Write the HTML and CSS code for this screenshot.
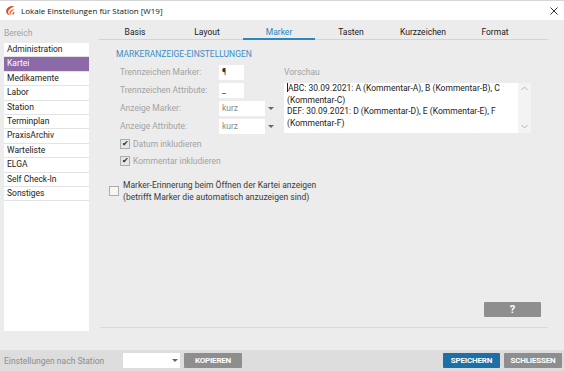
FILE: index.html
```html
<!DOCTYPE html>
<html lang="de">
<head>
    <meta charset="UTF-8">
    <meta name="viewport" content="width=device-width, initial-scale=1.0">
    <title>Lokale Einstellungen</title>
    <link rel="stylesheet" href="styles.css">
</head>
<body>
<div class="window">
    <div class="titlebar">
        <svg class="logo" width="11" height="11" viewBox="0 0 11 11">
            <path d="M9 1.2 C5 0.6 1.4 3 1.2 6.2 C1.1 8.4 2.8 10 5 10 C3.2 9 2.6 7.4 3.4 5.8 C4.4 3.6 6.8 2.4 9 1.2 Z" fill="#e0431f"/>
            <path d="M9.6 4.2 C7.2 4.2 4.8 5.4 4.4 7.4 C4.2 8.6 5 9.6 6.4 9.8 C5.6 8.8 5.8 7.6 6.8 6.6 C7.6 5.8 8.6 5 9.6 4.2 Z" fill="#f07a2a"/>
            <path d="M9.8 7 C8.6 7.2 7.6 7.8 7.4 8.6 C7.3 9.3 7.9 9.8 8.6 9.6 C8.4 8.8 9 7.8 9.8 7 Z" fill="#b82a18"/>
        </svg>
        <span class="title">Lokale Einstellungen für Station [W19]</span>
        <svg class="close" width="8" height="8" viewBox="0 0 8 8">
            <path d="M0.5 0.5 L7.5 7.5 M7.5 0.5 L0.5 7.5" stroke="#333" stroke-width="1"/>
        </svg>
    </div>

    <div class="main">
        <div class="sidebar">
            <div class="area-label">Bereich</div>
            <ul class="area-list">
                <li>Administration</li>
                <li class="selected">Kartei</li>
                <li>Medikamente</li>
                <li>Labor</li>
                <li>Station</li>
                <li>Terminplan</li>
                <li>PraxisArchiv</li>
                <li>Warteliste</li>
                <li>ELGA</li>
                <li>Self Check-In</li>
                <li>Sonstiges</li>
            </ul>
        </div>

        <div class="panel">
            <div class="tabs">
                <div class="tab">Basis</div>
                <div class="tab">Layout</div>
                <div class="tab active">Marker</div>
                <div class="tab">Tasten</div>
                <div class="tab">Kurzzeichen</div>
                <div class="tab">Format</div>
            </div>

            <div class="tab-body">
                <h2 class="section-title">MARKERANZEIGE-EINSTELLUNGEN</h2>

                <div class="marker-settings">
                    <div class="fields">
                        <div class="field-grid">
                            <label>Trennzeichen Marker:</label>
                            <div class="input short">¶</div>
                            <label>Trennzeichen Attribute:</label>
                            <div class="input short">_</div>
                            <label>Anzeige Marker:</label>
                            <div class="select"><span class="select-value">kurz</span><span class="arrow"></span></div>
                            <label>Anzeige Attribute:</label>
                            <div class="select"><span class="select-value">kurz</span><span class="arrow"></span></div>
                        </div>
                        <div class="check-row">
                            <span class="checkbox checked">✔</span>
                            <span class="check-text">Datum inkludieren</span>
                        </div>
                        <div class="check-row">
                            <span class="checkbox checked">✔</span>
                            <span class="check-text">Kommentar inkludieren</span>
                        </div>
                    </div>

                    <div class="preview">
                        <div class="preview-label">Vorschau</div>
                        <div class="preview-box">
                            <div class="preview-text">
                                <div><span class="caret"></span>ABC: 30.09.2021: A (Kommentar-A), B (Kommentar-B), C</div>
                                <div>(Kommentar-C)</div>
                                <div>DEF: 30.09.2021: D (Kommentar-D), E (Kommentar-E), F</div>
                                <div>(Kommentar-F)</div>
                            </div>
                            <div class="scrollbar">
                                <svg width="7" height="5" viewBox="0 0 7 5"><path d="M0.5 4 L3.5 1 L6.5 4" fill="none" stroke="#b4b4b4" stroke-width="1"/></svg>
                                <svg width="7" height="5" viewBox="0 0 7 5"><path d="M0.5 1 L3.5 4 L6.5 1" fill="none" stroke="#b4b4b4" stroke-width="1"/></svg>
                            </div>
                        </div>
                    </div>
                </div>

                <div class="reminder">
                    <span class="checkbox"></span>
                    <span class="reminder-text">Marker-Erinnerung beim Öffnen der Kartei anzeigen<br>(betrifft Marker die automatisch anzuzeigen sind)</span>
                </div>
            </div>

            <div class="help-row">
                <button class="btn help">?</button>
            </div>
        </div>
    </div>

    <div class="footer">
        <span class="footer-label">Einstellungen nach Station</span>
        <div class="select footer-select"><span class="arrow"></span></div>
        <button class="btn">KOPIEREN</button>
        <div class="footer-actions">
            <button class="btn primary">SPEICHERN</button>
            <button class="btn">SCHLIESSEN</button>
        </div>
    </div>
</div>
</body>
</html>
```

FILE: styles.css
```css
* {
    box-sizing: border-box;
}
body {
    margin: 0;
    font-family: Roboto, "Liberation Sans", sans-serif;
    font-size: 8.5px;
    color: #222;
    background: #ececec;
    overflow: hidden;
}
.window {
    width: 564px;
    height: 371px;
    display: flex;
    flex-direction: column;
    background: #ececec;
}

/* title bar */
.titlebar {
    height: 20px;
    background: #fff;
    border-top: 1px solid #d6d6d6;
    display: flex;
    align-items: center;
    padding: 0 5px;
}
.logo {
    margin-right: 5px;
}
.title {
    font-family: "Open Sans", sans-serif;
    font-size: 8px;
    color: #111;
    flex: 1;
}
.close {
    margin-right: 1px;
}

/* main area */
.main {
    flex: 1;
    display: flex;
    padding: 0 4px 19px 4px;
}
.sidebar {
    width: 85px;
    display: flex;
    flex-direction: column;
}
.area-label {
    height: 23px;
    padding-top: 7px;
    line-height: 12px;
    color: #a3a3a3;
}
.area-list {
    flex: 1;
    list-style: none;
    margin: 0;
    padding: 0;
    background: #fff;
}
.area-list li {
    height: 14.4px;
    line-height: 13.4px;
    padding-left: 3px;
    border-bottom: 1px solid #e3e3e3;
    color: #222;
}
.area-list li.selected {
    background: #8c69a7;
    color: #fff;
}

.panel {
    width: 448px;
    margin-left: 11px;
    margin-bottom: 3px;
    display: flex;
    flex-direction: column;
    border-bottom: 1px solid #d9d9d9;
}
.tabs {
    display: flex;
    padding-top: 6px;
    margin-left: -1px;
    border-bottom: 1px solid #d4d4d4;
}
.tab {
    width: 72px;
    height: 13px;
    line-height: 13px;
    text-align: center;
    color: #1a1a1a;
}
.tab.active {
    color: #2f85bd;
    height: 12px;
    line-height: 12px;
    margin-bottom: -1px;
    border-bottom: 2px solid #2f85bd;
    box-sizing: content-box;
}

.tab-body {
    padding-left: 9px;
}
.section-title {
    margin: 9px 0 5px 7px;
    font-size: 8.5px;
    font-weight: normal;
    line-height: 11px;
    color: #3a8fc7;
}
.marker-settings {
    display: flex;
}
.fields {
    width: 164px;
    margin-left: 11px;
}
.field-grid {
    display: grid;
    grid-template-columns: 99px auto;
    grid-auto-rows: 15px;
    row-gap: 3px;
}
.field-grid label {
    line-height: 15px;
    color: #a3a3a3;
}
.input {
    background: #fff;
    height: 15px;
    line-height: 15px;
    padding-left: 3px;
    color: #333;
}
.input.short {
    width: 25px;
}
.select {
    display: flex;
    width: 58px;
    height: 15px;
}
.select-value {
    width: 46px;
    background: #fff;
    line-height: 15px;
    padding-left: 3px;
    color: #8a8a8a;
}
.arrow {
    flex: 1;
    display: flex;
    align-items: center;
    justify-content: center;
}
.arrow::after {
    content: "";
    border-left: 3px solid transparent;
    border-right: 3px solid transparent;
    border-top: 3px solid #666;
}

.check-row {
    display: flex;
    align-items: center;
    height: 15px;
    margin-top: 2px;
}
.check-row:first-of-type {
    margin-top: 3px;
}
.checkbox {
    width: 10px;
    height: 10px;
    border: 1px solid #adadad;
    background: #f4f4f4;
    font-size: 8px;
    line-height: 8px;
    text-align: center;
    color: #2a2a2a;
    flex-shrink: 0;
}
.checkbox.checked {
    background: #e6e6e6;
}
.check-text {
    margin-left: 3px;
    color: #a3a3a3;
}

.preview {
    width: 247px;
    padding-top: 1px;
}
.preview-label {
    line-height: 12px;
    margin-bottom: 5px;
    color: #a3a3a3;
}
.preview-box {
    display: flex;
    height: 50px;
}
.preview-text {
    flex: 1;
    background: #fff;
    padding-left: 3px;
    line-height: 11.5px;
    white-space: nowrap;
    color: #222;
}
.caret {
    display: inline-block;
    width: 1px;
    height: 9px;
    background: #222;
    vertical-align: -1px;
}
.scrollbar {
    width: 13px;
    background: #f3f3f3;
    display: flex;
    flex-direction: column;
    align-items: center;
    justify-content: space-between;
    padding: 3px 0 4px;
}

.reminder {
    display: flex;
    align-items: flex-start;
    margin-top: 11px;
}
.reminder .checkbox {
    margin-top: 7px;
    background: #f6f6f6;
}
.reminder-text {
    margin-left: 4px;
    line-height: 12px;
    color: #3a3a3a;
}

.help-row {
    margin-top: auto;
    display: flex;
    justify-content: flex-end;
    padding: 0 7px 10px 0;
}

.btn {
    height: 15px;
    border: none;
    border-radius: 1px;
    padding: 0;
    background: #8e8e8e;
    color: #fff;
    font-family: Roboto, "Liberation Sans", sans-serif;
    font-size: 8px;
    font-weight: bold;
    letter-spacing: -0.2px;
    width: 58px;
}
.btn.help {
    width: 57px;
    font-size: 11px;
}
.btn.primary {
    background: #1f6fa7;
}

/* footer */
.footer {
    height: 21px;
    background: #dddddd;
    display: flex;
    align-items: center;
    padding: 0 2px 0 4px;
}
.footer-label {
    width: 119px;
    color: #8c8c8c;
}
.footer-select {
    width: 57px;
    background: #fff;
    height: 15px;
    margin-right: 4px;
    justify-content: flex-end;
}
.footer-select .arrow {
    flex: none;
    width: 11px;
}
.footer-actions {
    margin-left: auto;
    display: flex;
    gap: 4px;
}
.footer-actions .btn:first-child {
    width: 57px;
}
```
